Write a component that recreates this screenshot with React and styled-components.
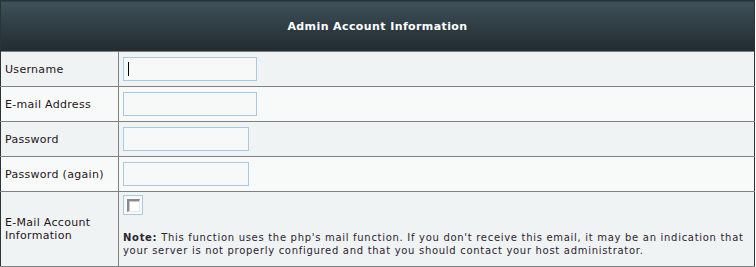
import React from "react";
import styled, { createGlobalStyle } from "styled-components";

const Global = createGlobalStyle`
  html, body { margin: 0; padding: 0; background: #ffffff; }
  body { font-family: "DejaVu Sans", Verdana, sans-serif; }
`;

const Table = styled.table`
  width: 755px;
  border-collapse: collapse;
  border: 1px solid #2a3338;
  font-family: "DejaVu Sans", Verdana, sans-serif;
  font-size: 11px;
  letter-spacing: 0.3px;
  color: #1f1420;
`;

const HeadCell = styled.th`
  height: 50px;
  padding: 0;
  text-align: center;
  vertical-align: middle;
  color: #ffffff;
  font-weight: bold;
  font-size: 11px;
  letter-spacing: 0.4px;
  background: linear-gradient(to bottom, #3f5159 0%, #2f3d44 50%, #222c31 100%);
`;

const Row = styled.tr`
  background: ${(p) => (p.$alt ? "#f8fafa" : "#f0f3f4")};
`;

const Label = styled.td`
  width: 109px;
  padding: 0 4px;
  height: ${(p) => p.$h || 34}px;
  border: 1px solid #808080;
  border-left-color: #2a3338;
  vertical-align: middle;
  line-height: 13px;
`;

const Field = styled.td`
  padding: ${(p) => (p.$top ? "3px 4px 8px" : "0 4px")};
  border: 1px solid #808080;
  border-right-color: #2a3338;
  vertical-align: ${(p) => (p.$top ? "top" : "middle")};
`;

const InputWrap = styled.span`
  position: relative;
  display: inline-block;
  vertical-align: middle;
`;

const TextInput = styled.input`
  display: block;
  box-sizing: border-box;
  width: ${(p) => p.$w}px;
  height: 24px;
  margin: 0;
  padding: 2px 4px;
  border: 1px solid #a9c8e2;
  background: #f7f9f9;
  font-family: "DejaVu Sans", Verdana, sans-serif;
  font-size: 11px;
  outline: none;
`;

const Caret = styled.span`
  position: absolute;
  left: 5px;
  top: 5px;
  width: 1px;
  height: 14px;
  background: #000;
`;

const CheckFrame = styled.span`
  display: flex;
  align-items: center;
  justify-content: center;
  box-sizing: border-box;
  width: 20px;
  height: 20px;
  border: 1px solid #a9c8e2;
  background: #f7f9f9;
`;

const Check = styled.input`
  appearance: none;
  box-sizing: border-box;
  width: 13px;
  height: 13px;
  margin: 0;
  background: #ffffff;
  border-style: solid;
  border-width: 2px 1px 1px 2px;
  border-color: #8a8a8a #e8e8e8 #e8e8e8 #8a8a8a;
  box-shadow: inset 1px 1px 0 #c8c8c8;
`;

const Note = styled.p`
  margin: 16px 0 0;
  padding-right: 6px;
  font-size: 10px;
  line-height: 13px;
  letter-spacing: 0.7px;
  color: #2c2430;
`;

const rows = [
  { label: "Username", w: 134, caret: true },
  { label: "E-mail Address", w: 134, type: "text" },
  { label: "Password", w: 126, type: "password" },
  { label: "Password (again)", w: 126, type: "password" },
];

export default function App() {
  return (
    <>
      <Global />
      <Table>
        <thead>
          <tr>
            <HeadCell colSpan={2}>Admin Account Information</HeadCell>
          </tr>
        </thead>
        <tbody>
          {rows.map((r, i) => (
            <Row key={r.label} $alt={i % 2 === 1}>
              <Label>{r.label}</Label>
              <Field>
                <InputWrap>
                  <TextInput $w={r.w} type={r.type || "text"} />
                  {r.caret && <Caret />}
                </InputWrap>
              </Field>
            </Row>
          ))}
          <Row>
            <Label $h={74}>
              E-Mail Account
              <br />
              Information
            </Label>
            <Field $top>
              <CheckFrame>
                <Check type="checkbox" />
              </CheckFrame>
              <Note>
                <b>Note:</b> This function uses the php's mail function. If you
                don't receive this email, it may be an indication that your
                server is not properly configured and that you should contact
                your host administrator.
              </Note>
            </Field>
          </Row>
        </tbody>
      </Table>
    </>
  );
}
